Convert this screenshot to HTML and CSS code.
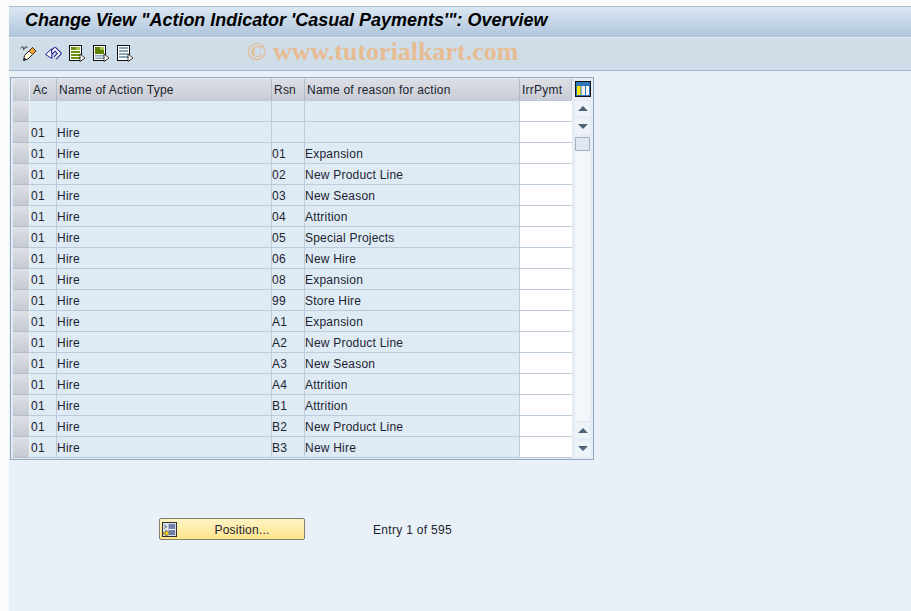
FILE: index.html
```html
<!DOCTYPE html>
<html lang="en">
<head>
<meta charset="utf-8">
<title>Change View</title>
<link rel="stylesheet" href="styles.css">
</head>
<body>
<div class="window">
  <header class="titlebar"><h1>Change View "Action Indicator 'Casual Payments'": Overview</h1></header>
  <div class="toolbar">
    <svg class="tool" viewBox="0 0 18 18"><path d="M1 4.500c.5-2 2-2.500 2.500-1s-.5 2.500.5 2 1-3 2-3 1 1.500 1.500 1" fill="none" stroke="#222" stroke-width="1"/><path d="M3.500 16.500l1-5 8-8 3.500 3.500-8 8z" fill="#fdf6dc" stroke="#222"/><path d="M9 7l3.500-3.500L16 7l-3.500 3.500z" fill="#f2a030" stroke="#222" stroke-width=".7"/><path d="M3.500 16.500l.8-3 2.200 2.200z" fill="#222"/></svg>
    <svg class="tool" viewBox="0 0 18 18"><path d="M6 10l5-5 4.500 4.500-4.500 4.500" fill="none" stroke="#1a1a90" stroke-width="4" stroke-linejoin="round"/><path d="M6 10l5-5 4.500 4.500-4.500 4.500" fill="none" stroke="#fff" stroke-width="2" stroke-linejoin="round"/><path d="M1.500 10.500L7.500 5l.5 9.500z" fill="#fff" stroke="#1a1a90" stroke-linejoin="round"/></svg>
    <svg class="tool" viewBox="0 0 18 18"><rect x="1.500" y="1.500" width="12" height="15" fill="#fff" stroke="#111"/><rect x="3" y="3" width="9" height="3" fill="#6f8f10"/><rect x="8" y="3" width="4" height="3" fill="#a9c24a"/><rect x="3" y="7" width="9" height="2" fill="#6f8f10"/><rect x="3" y="10" width="9" height="2" fill="#6f8f10"/><rect x="3" y="13" width="9" height="2" fill="#6f8f10"/><path d="M12 10l5 4-5 3.500z" fill="#fff" stroke="#111" stroke-width=".8"/></svg>
    <svg class="tool" viewBox="0 0 18 18"><rect x="1.500" y="1.500" width="12" height="15" fill="#fff" stroke="#111"/><rect x="3" y="3" width="9" height="7" fill="#5f8000"/><rect x="8" y="3" width="4" height="3" fill="#a9c24a"/><rect x="3" y="11" width="9" height="1.500" fill="#8aa8b8"/><rect x="3" y="13.500" width="9" height="1.500" fill="#8aa8b8"/><path d="M12 10l5 4-5 3.500z" fill="#fff" stroke="#111" stroke-width=".8"/></svg>
    <svg class="tool" viewBox="0 0 18 18"><rect x="1.500" y="1.500" width="12" height="15" fill="#fff" stroke="#111"/><rect x="3" y="3" width="9" height="2" fill="#8aa8b8"/><rect x="3" y="6" width="9" height="2" fill="#8aa8b8"/><rect x="3" y="9" width="9" height="2" fill="#8aa8b8"/><rect x="3" y="12" width="9" height="2" fill="#8aa8b8"/><path d="M12 10l5 4-5 3.500z" fill="#fff" stroke="#111" stroke-width=".8"/></svg>
    <span class="watermark">© www.tutorialkart.com</span>
  </div>
  <main class="content">
    <section class="table-box">
      <div class="table">
        <div class="row head">
          <div class="sel"></div><div class="cell">Ac</div><div class="cell">Name of Action Type</div><div class="cell">Rsn</div><div class="cell">Name of reason for action</div><div class="cell">IrrPymt</div>
        </div>
        <div class="row"><div class="sel"></div><div class="cell"></div><div class="cell"></div><div class="cell"></div><div class="cell"></div><div class="cell input"></div></div>
        <div class="row"><div class="sel"></div><div class="cell">01</div><div class="cell">Hire</div><div class="cell"></div><div class="cell"></div><div class="cell input"></div></div>
        <div class="row"><div class="sel"></div><div class="cell">01</div><div class="cell">Hire</div><div class="cell">01</div><div class="cell">Expansion</div><div class="cell input"></div></div>
        <div class="row"><div class="sel"></div><div class="cell">01</div><div class="cell">Hire</div><div class="cell">02</div><div class="cell">New Product Line</div><div class="cell input"></div></div>
        <div class="row"><div class="sel"></div><div class="cell">01</div><div class="cell">Hire</div><div class="cell">03</div><div class="cell">New Season</div><div class="cell input"></div></div>
        <div class="row"><div class="sel"></div><div class="cell">01</div><div class="cell">Hire</div><div class="cell">04</div><div class="cell">Attrition</div><div class="cell input"></div></div>
        <div class="row"><div class="sel"></div><div class="cell">01</div><div class="cell">Hire</div><div class="cell">05</div><div class="cell">Special Projects</div><div class="cell input"></div></div>
        <div class="row"><div class="sel"></div><div class="cell">01</div><div class="cell">Hire</div><div class="cell">06</div><div class="cell">New Hire</div><div class="cell input"></div></div>
        <div class="row"><div class="sel"></div><div class="cell">01</div><div class="cell">Hire</div><div class="cell">08</div><div class="cell">Expansion</div><div class="cell input"></div></div>
        <div class="row"><div class="sel"></div><div class="cell">01</div><div class="cell">Hire</div><div class="cell">99</div><div class="cell">Store Hire</div><div class="cell input"></div></div>
        <div class="row"><div class="sel"></div><div class="cell">01</div><div class="cell">Hire</div><div class="cell">A1</div><div class="cell">Expansion</div><div class="cell input"></div></div>
        <div class="row"><div class="sel"></div><div class="cell">01</div><div class="cell">Hire</div><div class="cell">A2</div><div class="cell">New Product Line</div><div class="cell input"></div></div>
        <div class="row"><div class="sel"></div><div class="cell">01</div><div class="cell">Hire</div><div class="cell">A3</div><div class="cell">New Season</div><div class="cell input"></div></div>
        <div class="row"><div class="sel"></div><div class="cell">01</div><div class="cell">Hire</div><div class="cell">A4</div><div class="cell">Attrition</div><div class="cell input"></div></div>
        <div class="row"><div class="sel"></div><div class="cell">01</div><div class="cell">Hire</div><div class="cell">B1</div><div class="cell">Attrition</div><div class="cell input"></div></div>
        <div class="row"><div class="sel"></div><div class="cell">01</div><div class="cell">Hire</div><div class="cell">B2</div><div class="cell">New Product Line</div><div class="cell input"></div></div>
        <div class="row"><div class="sel"></div><div class="cell">01</div><div class="cell">Hire</div><div class="cell">B3</div><div class="cell">New Hire</div><div class="cell input"></div></div>
      </div>
      <aside class="scrollbar">
        <svg class="config" viewBox="0 0 16 16"><rect x=".5" y=".5" width="15" height="15" fill="#2f74b5" stroke="#111"/><rect x="2" y="5" width="3.500" height="9" fill="#ffe600"/><rect x="6.500" y="5" width="3.500" height="9" fill="#f2f2f2"/><rect x="11" y="5" width="3" height="9" fill="#f2f2f2"/></svg>
        <div class="sb-btn"><span class="arrow up"></span></div>
        <div class="sb-btn"><span class="arrow down"></span></div>
        <div class="thumb"></div>
        <div class="track"></div>
        <div class="sb-btn"><span class="arrow up"></span></div>
        <div class="sb-btn"><span class="arrow down"></span></div>
      </aside>
    </section>
    <div class="footer-line">
      <button class="position" type="button">
        <svg class="pos-icon" viewBox="0 0 16 16"><rect x=".5" y=".5" width="15" height="15" fill="#dfe6f2" stroke="#222"/><rect x="7" y="2" width="7" height="12" fill="#6d7fa8"/><path d="M7 8h7" stroke="#fff"/><path d="M2 3l3 2-3 2" fill="none" stroke="#555"/><path d="M1 11h3V8.500l4 3.500-4 3.500V13H1z" fill="#ffd21e" stroke="#333" stroke-width=".6"/></svg>
        <span>Position...</span>
      </button>
      <span class="entry">Entry 1 of 595</span>
    </div>
  </main>
</div>
</body>
</html>
```

FILE: styles.css
```css
* { box-sizing: border-box; }
html, body { margin: 0; height: 100%; }
body {
  background: #fafbfd;
  font-family: "Liberation Sans", Arial, sans-serif;
  font-size: 12px;
  letter-spacing: .22px;
  color: #1c2430;
  overflow: hidden;
}
.window {
  margin: 6px 0 0 9px;
  height: 605px;
  display: flex;
  flex-direction: column;
  background: #e9f0f8;
}
.titlebar {
  height: 31px;
  flex: none;
  border-top: 1px solid #a9bdd2;
  background: linear-gradient(#dbe7f2, #afc5dc);
  display: flex;
  align-items: center;
  padding: 0 0 3px 16px;
}
.titlebar h1 {
  margin: 0;
  font: italic bold 18px "Liberation Sans", Arial, sans-serif;
  letter-spacing: -.03px;
  color: #000;
  white-space: nowrap;
}
.toolbar {
  position: relative;
  height: 34px;
  flex: none;
  background: #cfdde9;
  border-top: 1px solid #e4edf5;
  border-bottom: 1px solid #a3b9cf;
  display: flex;
  align-items: center;
  gap: 6px;
  padding: 0 0 2px 11px;
}
.tool { width: 18px; height: 18px; flex: none; }
.watermark {
  position: absolute;
  left: 238px;
  top: -1px;
  font: bold 26px "Liberation Serif", serif;
  letter-spacing: 0;
  color: #e7bc92;
  white-space: nowrap;
}
.content { flex: 1; padding: 6px 0 0 1px; }
.table-box {
  width: 584px;
  height: 383px;
  border: 1px solid #93aac3;
  background: #e2e9f2;
  padding: 1px 1px 0 2px;
  display: flex;
}
.table { width: 559px; flex: none; }
.row {
  height: 21px;
  display: grid;
  grid-template-columns: 17px 27px 215px 33px 215px 52px;
  background: #deeaf4;
}
.row.head { height: 22px; background: linear-gradient(#dcdfe5, #c8ccd4); border-bottom: 1px solid #bcc9d8; }
.sel {
  background: linear-gradient(#dde0e5, #c6cad2);
  border-bottom: 1px solid #b3bcc8;
  border-right: 1px solid #f2f5f8;
}
.cell {
  padding-top: 1px;
  line-height: 21px;
  white-space: nowrap;
  overflow: hidden;
  border-right: 1px solid #bccad9;
  border-bottom: 1px solid #bccad9;
}
.cell:nth-child(2) { padding-left: 1px; }
.head .cell { padding-left: 2px; border-bottom: 0; border-right: 1px solid #b0b9c6; line-height: 20px; }
.head .cell:nth-child(2) { padding-left: 3px; }
.head .sel { border-bottom: 0; }
.cell.input { background: #fff; border-right: 0; }
.scrollbar {
  width: 21px;
  flex: none;
  display: flex;
  flex-direction: column;
  align-items: center;
  background: #e6ecf4;
}
.config { width: 16px; height: 16px; margin: 2px 0 4px; flex: none; }
.sb-btn {
  width: 15px;
  height: 15px;
  margin-bottom: 3px;
  flex: none;
  background: #eef3f8;
  display: flex;
  align-items: center;
  justify-content: center;
}
.arrow { width: 0; height: 0; border-left: 5px solid transparent; border-right: 5px solid transparent; }
.arrow.up { border-bottom: 5px solid #4d6478; }
.arrow.down { border-top: 5px solid #4d6478; }
.thumb {
  width: 15px;
  height: 14px;
  flex: none;
  background: #dfe8f1;
  border: 1px solid #9fb1c4;
  border-radius: 1px;
}
.track { flex: 1; width: 15px; background: #f3f6fa; margin-bottom: 2px; }
.footer-line {
  display: flex;
  align-items: center;
  margin-top: 58px;
  padding-left: 149px;
}
.position {
  width: 146px;
  height: 22px;
  padding: 1px 0 0 2px;
  display: flex;
  align-items: center;
  background: linear-gradient(#fdf3c4, #fee48c);
  border: 1px solid #857f66;
  border-radius: 2px;
  font: 12px "Liberation Sans", Arial, sans-serif;
  letter-spacing: .22px;
  color: #1c2430;
}
.pos-icon { width: 15px; height: 15px; flex: none; }
.position span { flex: 1; text-align: center; padding-left: 3px; }
.entry { margin: 1px 0 0 68px; letter-spacing: .3px; }
```
